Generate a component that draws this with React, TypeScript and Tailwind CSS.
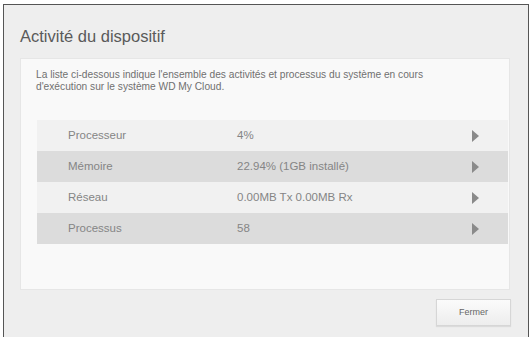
const rows = [
  { label: "Processeur", value: "4%", dark: false },
  { label: "Mémoire", value: "22.94% (1GB installé)", dark: true },
  { label: "Réseau", value: "0.00MB Tx 0.00MB Rx", dark: false },
  { label: "Processus", value: "58", dark: true },
];

const App = () => {
  return (
    <div
      className="h-[337px] w-[529px] overflow-hidden bg-white pl-[3px] pt-[4px]"
      style={{ fontFamily: '"Liberation Sans", Arial, sans-serif' }}
    >
      <div className="flex h-[333px] w-[526px] flex-col border border-b-0 border-[#555] bg-[#eeeeee]">
        {/* Title */}
        <h1 className="pl-[16px] pt-[21px] text-[16.5px] leading-[20px] text-[#5a5a5a]">
          Activité du dispositif
        </h1>
        {/* Panel */}
        <div className="ml-[16px] mt-[12px] flex h-[232px] w-[490px] flex-col border border-[#e6e6e6] bg-[#f9f9f9]">
          <p className="pl-[15px] pr-[10px] pt-[10px] text-[10.2px] leading-[12px] text-[#707070]">
            La liste ci-dessous indique l'ensemble des activités et processus du système en cours
            <br />
            d'exécution sur le système WD My Cloud.
          </p>
          <div className="ml-[16px] mr-px mt-[27px] flex flex-col">
            {rows.map((row, index) => (
              <div
                key={index}
                className={`flex h-[31px] items-center text-[11.5px] text-[#858585] ${row.dark ? "bg-[#dcdcdc]" : "bg-[#f1f1f1]"}`}
              >
                <span className="w-[200px] pl-[31px]">{row.label}</span>
                <span className="flex-1">{row.value}</span>
                <svg width="7" height="12" viewBox="0 0 7 12" className="mr-[29px]">
                  <polygon points="0,0 7,6 0,12" fill="#8a8a8a" />
                </svg>
              </div>
            ))}
          </div>
        </div>
        {/* Footer */}
        <div className="flex justify-end pr-[17px] pt-[9px]">
          <button className="h-[27px] w-[75px] border border-[#d6d6d6] bg-gradient-to-b from-[#fbfbfb] to-[#ededed] text-[9px] text-[#666] shadow-[0_1px_1px_rgba(0,0,0,0.08)]">
            Fermer
          </button>
        </div>
      </div>
    </div>
  );
};

export default App;
